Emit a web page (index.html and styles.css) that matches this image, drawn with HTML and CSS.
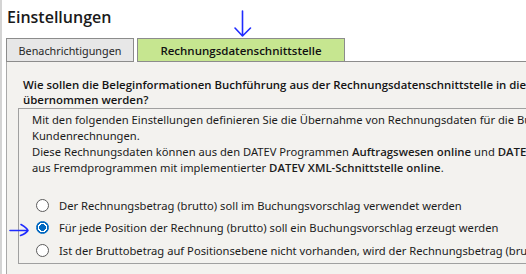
FILE: index.html
```html
<!DOCTYPE html>
<html lang="de">
<head>
<meta charset="utf-8">
<title>Einstellungen</title>
<link rel="stylesheet" href="styles.css">
</head>
<body>
<div class="page">
  <h1 class="title">Einstellungen</h1>
  <div class="tabs">
    <div class="tab">Benachrichtigungen</div>
    <div class="tab active">Rechnungsdatenschnittstelle</div>
    <div class="tab-rest"></div>
  </div>
  <div class="panel">
    <p class="question">Wie sollen die Beleginformationen Buchführung aus der Rechnungsdatenschnittstelle in die Buchführung<br>übernommen werden?</p>
    <div class="group">
      <div class="intro">
        <div class="line">Mit den folgenden Einstellungen definieren Sie die Übernahme von Rechnungsdaten für die Buchführung aus</div>
        <div class="line">Kundenrechnungen.</div>
        <div class="line">Diese Rechnungsdaten können aus den DATEV Programmen <b>Auftragswesen online</b> und <b>DATEV Rechnungswesen</b></div>
        <div class="line">aus Fremdprogrammen mit implementierter <b>DATEV XML-Schnittstelle online</b>.</div>
      </div>
      <div class="options">
        <div class="option"><span class="radio"></span><span>Der Rechnungsbetrag (brutto) soll im Buchungsvorschlag verwendet werden</span></div>
        <div class="option"><span class="radio checked"></span><span>Für jede Position der Rechnung (brutto) soll ein Buchungsvorschlag erzeugt werden</span></div>
        <div class="option"><span class="radio"></span><span>Ist der Bruttobetrag auf Positionsebene nicht vorhanden, wird der Rechnungsbetrag (brutto) verwendet</span></div>
      </div>
    </div>
  </div>
  <svg class="annot" width="526" height="274" viewBox="0 0 526 274" aria-hidden="true">
    <path d="M242.5 11 L242.5 36 M235 28 L242.5 36 L250.5 28" fill="none" stroke="#1f2bff" stroke-width="1.6" stroke-linecap="round" stroke-linejoin="round"/>
    <path d="M10 230.5 L28 230.5 M21 224.5 Q27 228 28 230.5 Q26 233.5 20.5 235.5" fill="none" stroke="#1f2bff" stroke-width="1.6" stroke-linecap="round" stroke-linejoin="round"/>
  </svg>
</div>
</body>
</html>
```

FILE: styles.css
```css
html, body {
  margin: 0;
  padding: 0;
  background: #ffffff;
  overflow: hidden;
}

body {
  width: 526px;
  height: 274px;
  font-family: "Noto Sans", "Open Sans", sans-serif;
  font-size: 11.2px;
  color: #1b1b1b;
}

.page {
  position: relative;
  width: 900px;
  height: 274px;
  border-left: 2px solid #d4d4d4;
  padding-left: 4px;
  box-sizing: border-box;
}

.title {
  margin: 0;
  padding: 7px 0 0 1px;
  height: 38px;
  box-sizing: border-box;
  font-family: "Open Sans", "Noto Sans", sans-serif;
  font-size: 16px;
  line-height: 20px;
  font-weight: 600;
  color: #1a1a1a;
}

.tabs {
  display: flex;
  align-items: flex-end;
  height: 24px;
}

.tab {
  box-sizing: border-box;
  height: 24px;
  width: 128px;
  border: 1px solid #8c8c8c;
  background: #e7e7e7;
  display: flex;
  align-items: center;
  justify-content: center;
  white-space: nowrap;
  font-size: 10.8px;
  color: #262626;
}

.tab.active {
  width: 208px;
  margin-left: 3px;
  background: #c6e690;
  font-family: "Open Sans", "Noto Sans", sans-serif;
  font-weight: 600;
  font-size: 11.5px;
  color: #111;
}

.tab-rest {
  flex: 1;
  height: 24px;
  border-bottom: 1px solid #8c8c8c;
  box-sizing: border-box;
}

.panel {
  height: 212px;
  background: #f3f2ef;
  border-left: 1px solid #a9a9a9;
  padding: 15px 0 0 16px;
  box-sizing: border-box;
}

.question {
  margin: 0;
  font-family: "Open Sans", "Noto Sans", sans-serif;
  font-weight: 600;
  font-size: 11.4px;
  line-height: 15px;
  white-space: nowrap;
  color: #141414;
}

.group {
  margin: 1px 0 0 -5px;
  border: 1px solid #a0a0a0;
  padding: 3px 0 1px 13px;
  white-space: nowrap;
}

.intro .line {
  line-height: 16px;
  height: 16px;
}

.intro b {
  font-family: "Open Sans", "Noto Sans", sans-serif;
  font-weight: 600;
  font-size: 11.4px;
}

.options {
  margin-top: 18px;
  display: flex;
  flex-direction: column;
}

.option {
  height: 22.5px;
  display: flex;
  align-items: center;
  gap: 10px;
}

.radio {
  flex: none;
  width: 13px;
  height: 13px;
  margin-left: 4px;
  box-sizing: border-box;
  border: 1px solid #5c5c5c;
  border-radius: 50%;
  background: #ffffff;
}

.radio.checked {
  border: 1px solid #0067c0;
  background: radial-gradient(circle, #0067c0 0 3.2px, #ffffff 3.6px 4.6px, #0067c0 5px);
}

.annot {
  position: absolute;
  left: -2px;
  top: 0;
  pointer-events: none;
}
```
